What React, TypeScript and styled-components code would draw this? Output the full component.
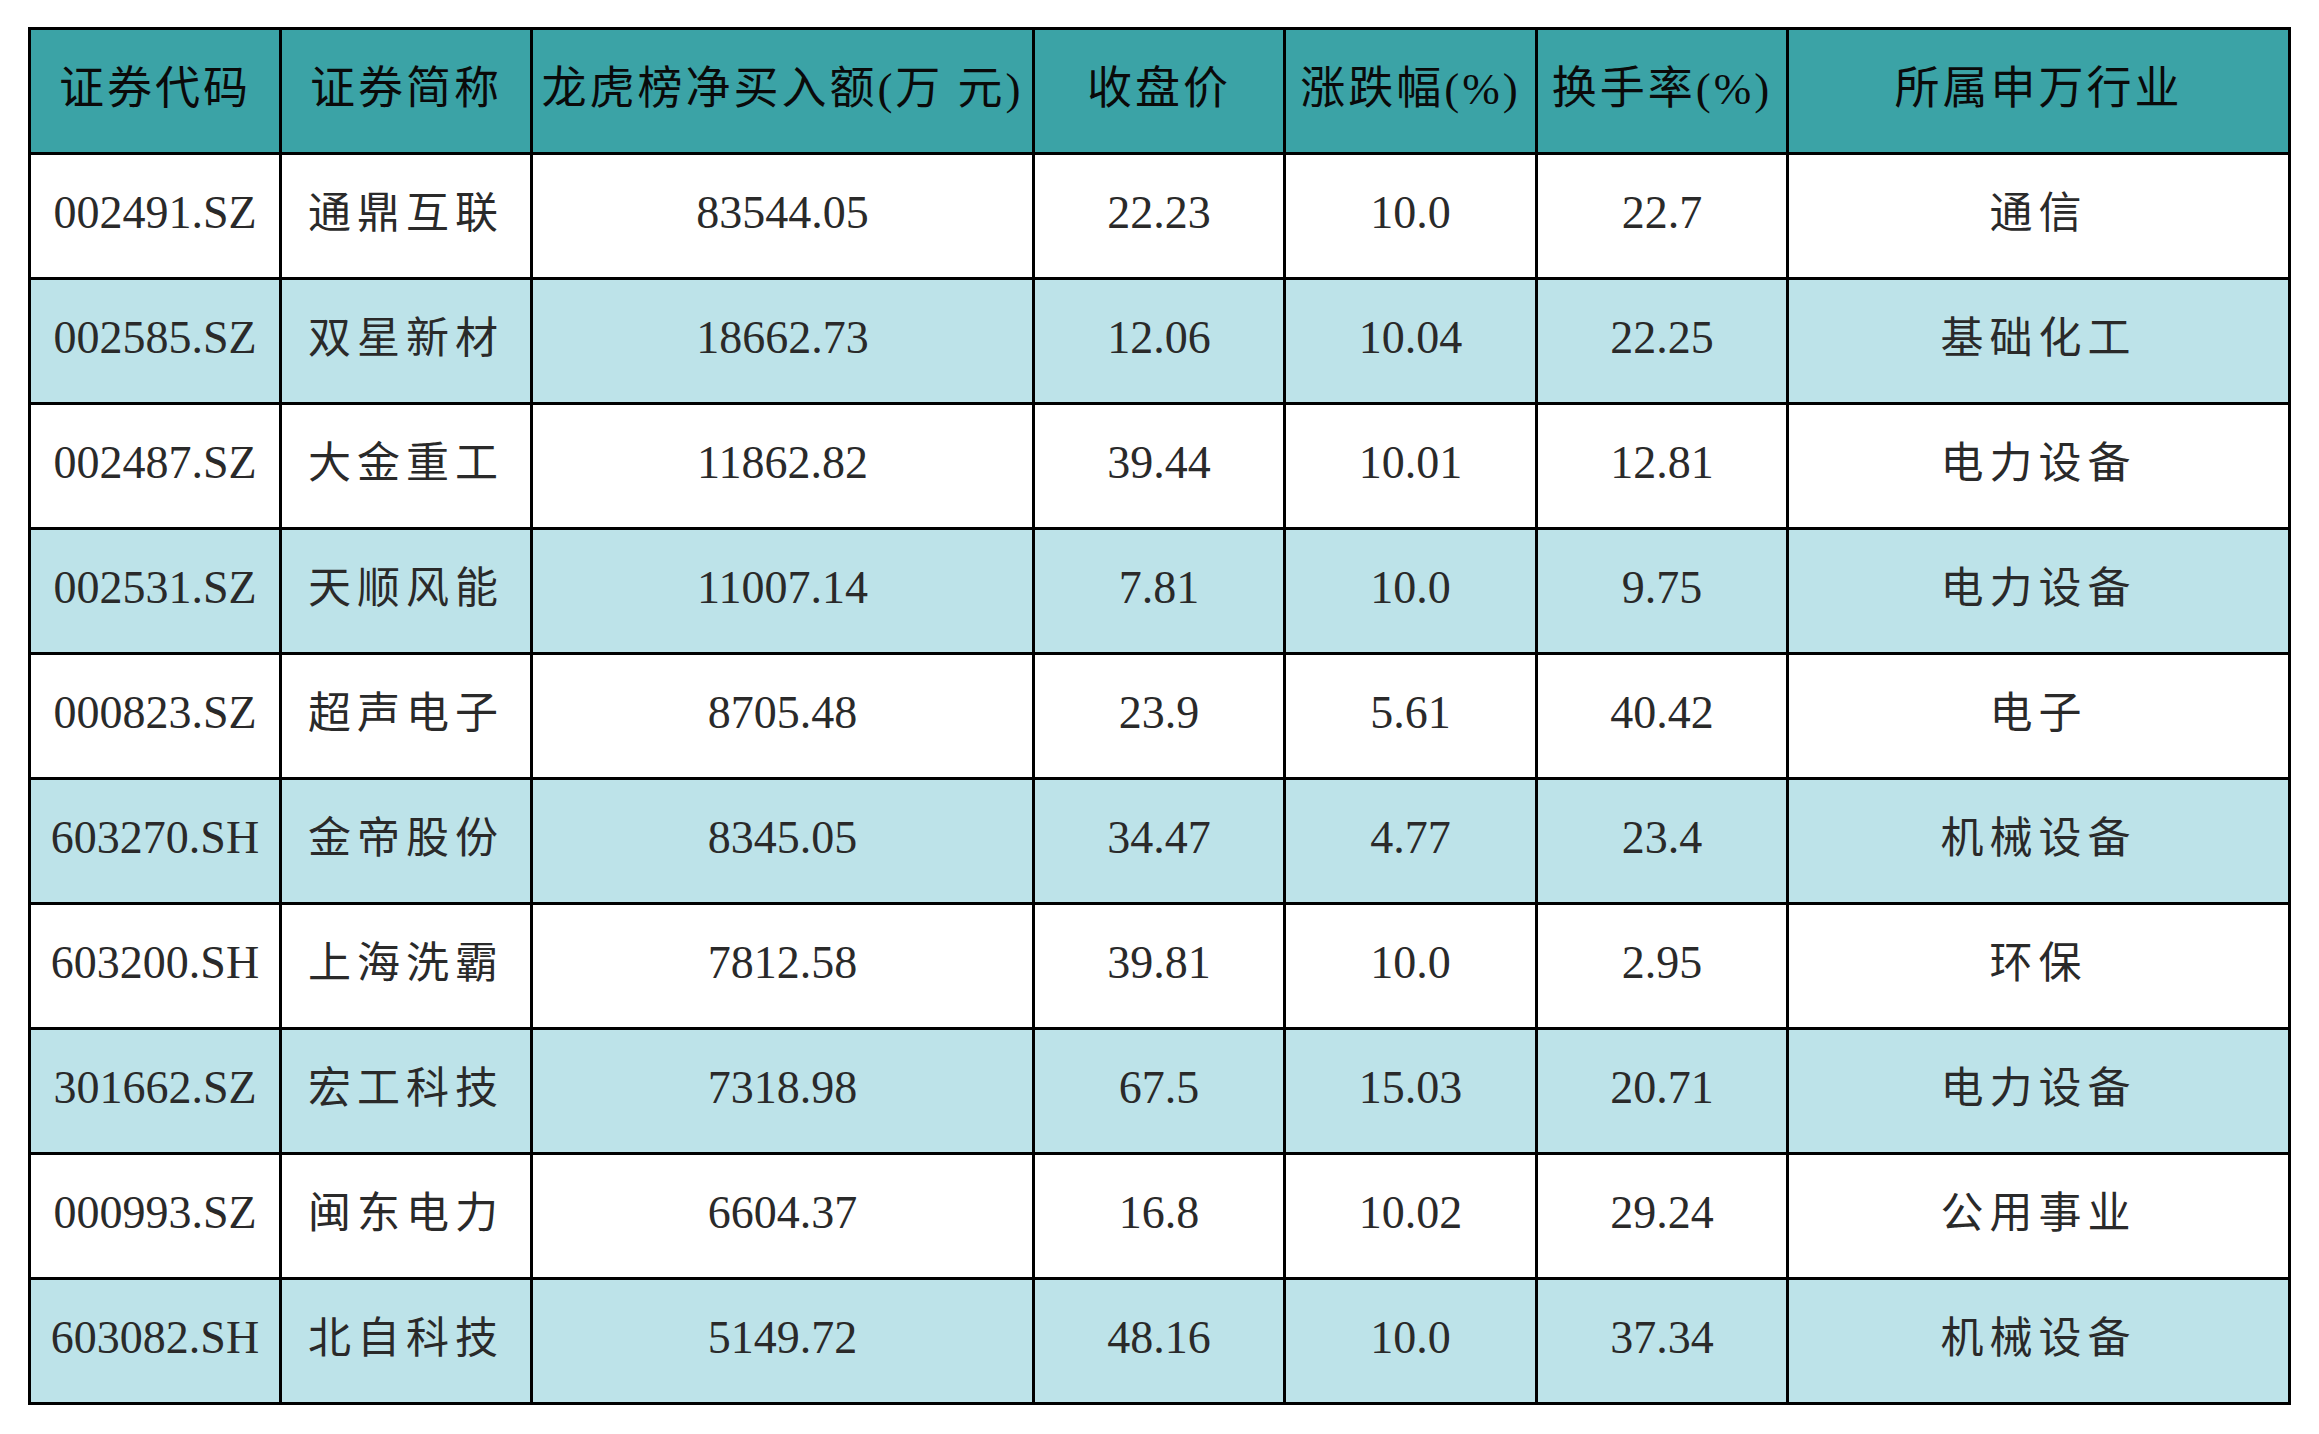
import React from "react";
import styled, { createGlobalStyle } from "styled-components";

const GlobalStyle = createGlobalStyle`
    html, body {
        margin: 0;
        padding: 0;
        background: #fff;
    }
`

const Page = styled.div`
    width: 2319px;
    height: 1434px;
    padding: 27px 0 0 28px;
    box-sizing: border-box;
    background: #fff;
`

const Table = styled.table`
    border-collapse: collapse;
    table-layout: fixed;
    width: 2263px;
    font-family: "Liberation Serif", "Noto Sans CJK SC", serif;
`

const Row = styled.tr<{ $striped?: boolean }>`
    height: 125px;
    background: ${p => (p.$striped ? "#bde3e9" : "#fff")};
`

const HeadRow = styled.tr`
    height: 125px;
    background: #3ba3a6;
`

const HeadCell = styled.th`
    border: 3px solid #000;
    padding: 0 0 4px 0;
    font-size: 45px;
    line-height: 1;
    font-weight: 400;
    color: #0a0a0a;
    letter-spacing: 3px;
    text-align: center;
    vertical-align: middle;
    white-space: nowrap;
`

const Cell = styled.td<{ $cjk?: boolean }>`
    border: 3px solid #000;
    padding: 0 0 6px 0;
    font-size: ${p => (p.$cjk ? "43px" : "46px")};
    line-height: 1;
    letter-spacing: ${p => (p.$cjk ? "6px" : "0")};
    color: #2a2a2a;
    text-align: center;
    vertical-align: middle;
    white-space: nowrap;
`

const widths = [251, 251, 502, 251, 252, 251, 502];

const headers = ["证券代码", "证券简称", "龙虎榜净买入额(万 元)", "收盘价", "涨跌幅(%)", "换手率(%)", "所属申万行业"];

const rows = [
    ["002491.SZ", "通鼎互联", "83544.05", "22.23", "10.0", "22.7", "通信"],
    ["002585.SZ", "双星新材", "18662.73", "12.06", "10.04", "22.25", "基础化工"],
    ["002487.SZ", "大金重工", "11862.82", "39.44", "10.01", "12.81", "电力设备"],
    ["002531.SZ", "天顺风能", "11007.14", "7.81", "10.0", "9.75", "电力设备"],
    ["000823.SZ", "超声电子", "8705.48", "23.9", "5.61", "40.42", "电子"],
    ["603270.SH", "金帝股份", "8345.05", "34.47", "4.77", "23.4", "机械设备"],
    ["603200.SH", "上海洗霸", "7812.58", "39.81", "10.0", "2.95", "环保"],
    ["301662.SZ", "宏工科技", "7318.98", "67.5", "15.03", "20.71", "电力设备"],
    ["000993.SZ", "闽东电力", "6604.37", "16.8", "10.02", "29.24", "公用事业"],
    ["603082.SH", "北自科技", "5149.72", "48.16", "10.0", "37.34", "机械设备"],
];

export default function App() {
    return (
        <>
            <GlobalStyle />
            <Page>
                <Table>
                    <colgroup>
                        {widths.map((w, i) => <col key={i} style={{ width: w }} />)}
                    </colgroup>
                    <thead>
                        <HeadRow>
                            {headers.map(h => <HeadCell key={h}>{h}</HeadCell>)}
                        </HeadRow>
                    </thead>
                    <tbody>
                        {rows.map((r, i) => (
                            <Row key={r[0]} $striped={i % 2 === 1}>
                                {r.map((v, j) => (
                                    <Cell key={j} $cjk={j === 1 || j === 6}>{v}</Cell>
                                ))}
                            </Row>
                        ))}
                    </tbody>
                </Table>
            </Page>
        </>
    )
}
